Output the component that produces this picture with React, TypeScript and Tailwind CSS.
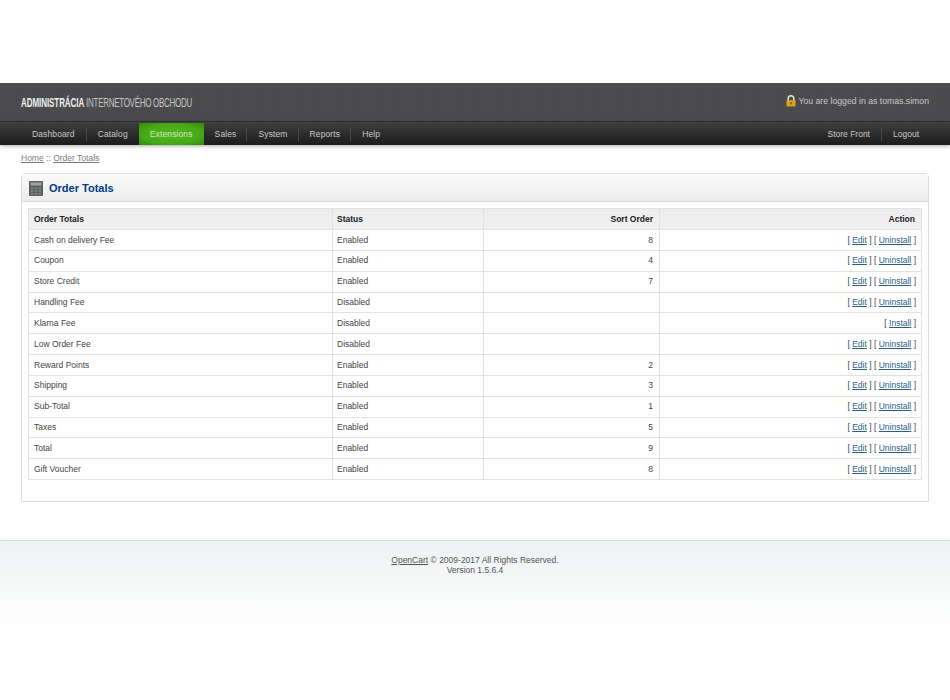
import { Fragment } from 'react'

type Row = { name: string; status: string; sort?: number; installed?: boolean }

const rows: Row[] = [
  { name: 'Cash on delivery Fee', status: 'Enabled', sort: 8, installed: true },
  { name: 'Coupon', status: 'Enabled', sort: 4, installed: true },
  { name: 'Store Credit', status: 'Enabled', sort: 7, installed: true },
  { name: 'Handling Fee', status: 'Disabled', installed: true },
  { name: 'Klarna Fee', status: 'Disabled' },
  { name: 'Low Order Fee', status: 'Disabled', installed: true },
  { name: 'Reward Points', status: 'Enabled', sort: 2, installed: true },
  { name: 'Shipping', status: 'Enabled', sort: 3, installed: true },
  { name: 'Sub-Total', status: 'Enabled', sort: 1, installed: true },
  { name: 'Taxes', status: 'Enabled', sort: 5, installed: true },
  { name: 'Total', status: 'Enabled', sort: 9, installed: true },
  { name: 'Gift Voucher', status: 'Enabled', sort: 8, installed: true },
]

const menu = ['Dashboard', 'Catalog', 'Extensions', 'Sales', 'System', 'Reports', 'Help']

function NavItem({ label, active, last, first }: { label: string; active?: boolean; last?: boolean; first?: boolean }) {
  if (active) {
    return (
      <li className="flex h-[22px] items-center self-end bg-[radial-gradient(ellipse_at_center,#52b81f_0%,#45a815_65%,#34860f_100%)] px-[11px] pt-[1px] text-[#cfe6c0]">
        {label}
      </li>
    )
  }
  return (
    <li className={`mt-[1px] flex h-[14px] items-center pl-[11px] ${first || last ? 'pr-[11px]' : 'pr-[10px]'} ${last ? '' : 'border-r border-[#4a4a4a]'}`}>{label}</li>
  )
}

function Lock() {
  return (
    <svg width="10" height="12" viewBox="0 0 10 12" className="mr-[2px]">
      <path d="M2.2 6V3.6a2.8 2.8 0 0 1 5.6 0V6" fill="none" stroke="#e8e2c8" strokeWidth="1.5" />
      <rect x="0.5" y="5.2" width="9" height="6.3" rx="1" fill="#e0a020" />
      <rect x="4.2" y="7.4" width="1.6" height="2" fill="#7a5208" />
    </svg>
  )
}

function Calculator() {
  return (
    <svg width="14" height="15" viewBox="0 0 14 15" className="block">
      <rect width="14" height="15" rx="1" fill="#5b5f5f" />
      <rect x="1.5" y="1.5" width="11" height="3" fill="#a0a4a4" />
      <g fill="#85898a">
        <rect x="2" y="6.5" width="2.5" height="1.5" />
        <rect x="5.7" y="6.5" width="2.5" height="1.5" />
        <rect x="9.4" y="6.5" width="2.5" height="1.5" />
        <rect x="2" y="9.2" width="2.5" height="1.5" />
        <rect x="5.7" y="9.2" width="2.5" height="1.5" />
        <rect x="9.4" y="9.2" width="2.5" height="1.5" />
        <rect x="2" y="12" width="2.5" height="1.5" />
        <rect x="5.7" y="12" width="2.5" height="1.5" />
        <rect x="9.4" y="12" width="2.5" height="1.5" />
      </g>
    </svg>
  )
}

export default function App() {
  return (
    <div className="min-h-[700px] bg-white pt-[83px] font-['Liberation_Sans',Arial,sans-serif] text-[8.5px] text-[#333]">
      <div className="flex h-[39px] items-start justify-between border-b border-[#333335] bg-[#4b4b4e] bg-[repeating-linear-gradient(90deg,rgba(255,255,255,0.012)_0px,rgba(255,255,255,0.012)_1px,transparent_1px,transparent_5px),repeating-linear-gradient(0deg,rgba(0,0,0,0.02)_0px,rgba(0,0,0,0.02)_1px,transparent_1px,transparent_5px)] pl-[21px] pr-[21px]">
        <div className="mt-[13px] origin-left scale-x-[0.64] whitespace-nowrap text-[12.5px] leading-[14px] tracking-[-0.45px] text-[#c4c4c4]">
          <span className="font-bold tracking-[-0.1px] text-[#f0f0f0]">ADMINISTRÁCIA</span> INTERNETOVÉHO OBCHODU
        </div>
        <div className="mt-[12px] flex items-center text-[8.7px] text-[#c8c8c8]">
          <Lock />
          <span className="leading-[12px]">You are logged in as tomas.simon</span>
        </div>
      </div>

      <div className="flex h-[23px] items-center justify-between bg-gradient-to-b from-[#404040] to-[#1c1c1c] pl-[21px] pr-[20px] text-[#c8c8c8] shadow-[0_1px_4px_rgba(0,0,0,0.35)]">
        <ul className="flex h-full items-center tracking-[0.12px]">
          {menu.map((label, i) => (
            <NavItem key={label} label={label} active={label === 'Extensions'} first={i === 0} last={i === menu.length - 1 || i === 1} />
          ))}
        </ul>
        <ul className="flex h-full items-center pt-[1px]">
          <li className="flex h-[14px] items-center border-r border-[#4a4a4a] pr-[11px]">Store Front</li>
          <li className="flex h-[14px] items-center pl-[11px] pr-[11px]">Logout</li>
        </ul>
      </div>

      <div className="px-[21px]">
        <div className="flex h-[28px] items-center pb-[2px] text-[#7a7a7a]">
          <a className="underline">Home</a>
          <span>&nbsp;::&nbsp;</span>
          <a className="underline">Order Totals</a>
        </div>

        <div className="h-[329px] rounded-t-[4px] border border-[#dcdcdc]">
          <div className="flex h-[28px] items-center gap-[6px] border-b border-[#dcdcdc] bg-gradient-to-b from-[#fafafa] to-[#ececec] pl-[7px] pt-[2px]">
            <Calculator />
            <h1 className="text-[11px] font-bold text-[#003a88]">Order Totals</h1>
          </div>
          <div className="px-[6px] pt-[6px]">
            <table className="w-full table-fixed border-collapse">
              <thead>
                <tr className="h-[21px] bg-[#efefef] font-bold text-[#222]">
                  <th className="w-[304px] border border-[#e2e2e2] px-[5px] text-left">Order Totals</th>
                  <th className="w-[151px] border border-[#e2e2e2] px-[4px] text-left">Status</th>
                  <th className="w-[176px] border border-[#e2e2e2] px-[6px] text-right">Sort Order</th>
                  <th className="border border-[#e2e2e2] px-[6px] text-right">Action</th>
                </tr>
              </thead>
              <tbody>
                {rows.map((row) => (
                  <tr key={row.name} className="h-[20.85px] text-[#444]">
                    <td className="border border-[#e2e2e2] px-[5px]">{row.name}</td>
                    <td className="border border-[#e2e2e2] px-[4px]">{row.status}</td>
                    <td className="border border-[#e2e2e2] px-[6px] text-right">{row.sort}</td>
                    <td className="border border-[#e2e2e2] px-[5px] text-right">
                      {row.installed ? (
                        <Fragment>
                          [ <a className="text-[#2b5f82] underline">Edit</a> ] [ <a className="text-[#2b5f82] underline">Uninstall</a> ]
                        </Fragment>
                      ) : (
                        <Fragment>
                          [ <a className="text-[#2b5f82] underline">Install</a> ]
                        </Fragment>
                      )}
                    </td>
                  </tr>
                ))}
              </tbody>
            </table>
          </div>
        </div>
      </div>

      <footer className="mt-[38px] h-[90px] border-t border-[#d8dcde] bg-gradient-to-b from-[#eef1f2] to-white pt-[14px] text-center leading-[10px] text-[#555] shadow-[0_-2px_3px_rgba(0,0,0,0.04)]">
        <div>
          <a className="underline">OpenCart</a> © 2009-2017 All Rights Reserved.
        </div>
        <div>Version 1.5.6.4</div>
      </footer>
    </div>
  )
}
